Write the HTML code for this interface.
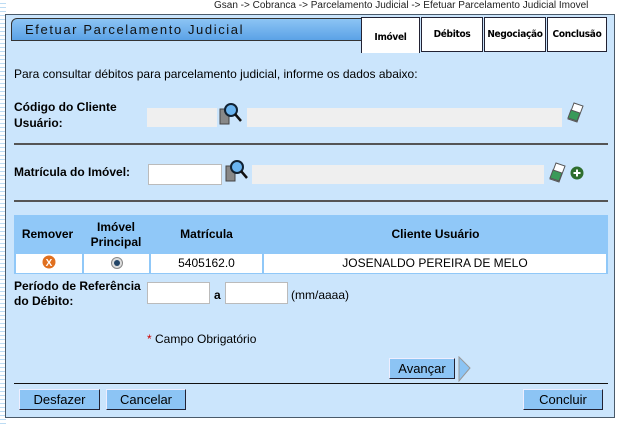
<!DOCTYPE html>
<html><head><meta charset="utf-8"><style>
*{margin:0;padding:0;box-sizing:border-box}
body{width:631px;height:427px;overflow:hidden;background:#fff;font-family:"Liberation Sans",Arial,sans-serif;font-size:12px;color:#000;position:relative}
.stripes{position:absolute;left:0;top:0;width:6px;height:427px;background:repeating-linear-gradient(#fff 0 3px,#bcdcf4 3px 4px)}
.a{position:absolute}
.panel{left:5px;top:14px;width:610px;height:404px;background:#cbe5fc;border:1px solid #4a5a6a}
.title{left:11px;top:18px;width:356px;height:23px;border:1px solid #333;border-radius:6px 0 0 0;background:linear-gradient(#8cc4f4,#5ba2e6);font-size:13px;letter-spacing:1.6px;padding:3px 0 0 13px;color:#111}
.tab{top:17px;height:35px;background:#fff;border:1px solid #223;font-weight:bold;font-size:10px;letter-spacing:-0.3px;font-family:"DejaVu Sans Condensed","Liberation Sans",sans-serif;text-align:center;padding-top:11px;white-space:nowrap}
.lbl{font-weight:bold}
.in{height:19px;background:#efefef}
.wh{background:#fff;border:1px solid #bbb}
.hr{height:2px;background:#555;left:14px;width:594px}
.th{background:#90c8f8;font-weight:bold;text-align:center;top:216px;height:37px;display:flex;align-items:center;justify-content:center;line-height:15px}
.td{background:#fff;text-align:center;top:254px;height:19px;line-height:19px}
.btn{height:21px;background:#8cc4f4;border:1px solid #223;border-top-color:#eef;border-left-color:#eef;text-align:center;line-height:19px;font-size:13px}
</style></head><body>
<div class="stripes"></div>
<div class="a" style="left:214px;top:0;font-size:10px;color:#222">Gsan -&gt; Cobranca -&gt; Parcelamento Judicial -&gt; Efetuar Parcelamento Judicial Imovel</div>
<div class="a panel"></div>
<div class="a title">Efetuar Parcelamento Judicial</div>
<div class="a tab" style="left:361px;width:59px;height:36px;border-bottom:none;padding-top:14px">Imóvel</div>
<div class="a tab" style="left:421px;width:62px">Débitos</div>
<div class="a tab" style="left:484px;width:62px">Negociação</div>
<div class="a tab" style="left:547px;width:60px">Conclusão</div>
<div class="a" style="left:14px;top:67px">Para consultar débitos para parcelamento judicial, informe os dados abaixo:</div>
<div class="a lbl" style="left:14px;top:99px;line-height:16px">Código do Cliente<br>Usuário:</div>
<div class="a in" style="left:147px;top:108px;width:70px"></div>
<svg class="a" style="left:219px;top:101px" width="25" height="25"><rect x="1" y="8" width="9" height="15" fill="#888" stroke="#444"/><circle cx="12" cy="9" r="6" fill="#6ab4f0" stroke="#123" stroke-width="2"/><line x1="16" y1="13" x2="22" y2="20" stroke="#111" stroke-width="2.5"/></svg>
<div class="a in" style="left:247px;top:108px;width:315px"></div>
<svg class="a" style="left:566px;top:102px" width="18" height="22"><path d="M8 1 L17 4 L11 20 L2 17Z" fill="#fff" stroke="#555"/><path d="M5 8 L14 11 L11 19 L2 16Z" fill="#3a9a5a" stroke="#555"/></svg>
<div class="a hr" style="top:143px"></div>
<div class="a lbl" style="left:14px;top:165px">Matrícula do Imóvel:</div>
<div class="a in wh" style="left:148px;top:164px;width:74px;height:21px"></div>
<svg class="a" style="left:225px;top:158px" width="25" height="25"><rect x="1" y="8" width="9" height="15" fill="#888" stroke="#444"/><circle cx="12" cy="9" r="6" fill="#6ab4f0" stroke="#123" stroke-width="2"/><line x1="16" y1="13" x2="22" y2="20" stroke="#111" stroke-width="2.5"/></svg>
<div class="a in" style="left:252px;top:165px;width:292px"></div>
<svg class="a" style="left:548px;top:162px" width="18" height="22"><path d="M8 1 L17 4 L11 20 L2 17Z" fill="#fff" stroke="#555"/><path d="M5 8 L14 11 L11 19 L2 16Z" fill="#3a9a5a" stroke="#555"/></svg>
<svg class="a" style="left:570px;top:166px" width="14" height="14"><circle cx="7" cy="7" r="6.5" fill="#2e6e2e"/><path d="M7 3.5V10.5M3.5 7H10.5" stroke="#fff" stroke-width="2"/></svg>
<div class="a hr" style="top:200px"></div>
<div class="a" style="left:14px;top:215px;width:594px;height:59px;background:#90c8f8"></div>
<div class="a th" style="left:14px;width:67px">Remover</div>
<div class="a th" style="left:83px;width:66px">Imóvel<br>Principal</div>
<div class="a th" style="left:151px;width:111px">Matrícula</div>
<div class="a th" style="left:264px;width:343px">Cliente Usuário</div>
<div class="a td" style="left:16px;width:66px"><svg width="14" height="14" style="vertical-align:-2px"><circle cx="7" cy="7" r="6.5" fill="#e07020"/><text x="7" y="11" font-size="10" font-weight="bold" fill="#fff" text-anchor="middle" font-family="Liberation Sans">X</text></svg></div>
<div class="a td" style="left:84px;width:65px"><svg width="12" height="12" style="vertical-align:-2px"><circle cx="6" cy="6" r="5.5" fill="#ddd" stroke="#888"/><circle cx="6" cy="6" r="3" fill="#246"/></svg></div>
<div class="a td" style="left:151px;width:111px">5405162.0</div>
<div class="a td" style="left:264px;width:342px">JOSENALDO PEREIRA DE MELO</div>
<div class="a lbl" style="left:14px;top:279px;line-height:15px">Período de Referência<br>do Débito:</div>
<div class="a in wh" style="left:147px;top:282px;width:63px;height:22px"></div>
<div class="a lbl" style="left:214px;top:288px">a</div>
<div class="a in wh" style="left:225px;top:282px;width:63px;height:22px"></div>
<div class="a" style="left:291px;top:288px">(mm/aaaa)</div>
<div class="a" style="left:147px;top:332px"><span style="color:#c00">*</span> Campo Obrigatório</div>
<div class="a btn" style="left:389px;top:358px;width:66px">Avançar</div>
<svg class="a" style="left:458px;top:356px" width="14" height="26"><path d="M1 1 L12 12 L1 25Z" fill="#8cc4f4" stroke="#999"/></svg>
<div class="a" style="left:14px;top:383px;width:594px;height:1px;background:#111"></div>
<div class="a btn" style="left:19px;top:389px;width:81px">Desfazer</div>
<div class="a btn" style="left:106px;top:389px;width:80px">Cancelar</div>
<div class="a btn" style="left:523px;top:389px;width:80px">Concluir</div>
</body></html>
